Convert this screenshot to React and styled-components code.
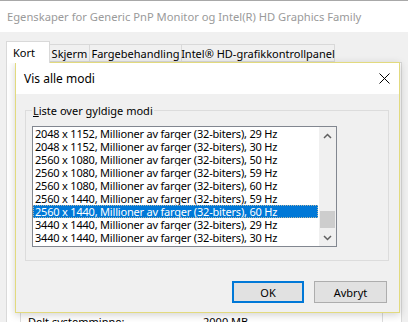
import React from "react";
import styled, { createGlobalStyle } from "styled-components";

const FONT = `"Noto Sans", "Open Sans", sans-serif`;

const Global = createGlobalStyle`
  html, body { margin: 0; padding: 0; }
  body {
    width: 408px;
    height: 322px;
    overflow: hidden;
    background: #f0f0f0;
    font-family: ${FONT};
    font-size: 11px;
    color: #000;
  }
  * { box-sizing: border-box; }
`;

const Window = styled.div`
  position: relative;
  width: 408px;
  height: 322px;
  display: flex;
  flex-direction: column;
  background: #f0f0f0;
  overflow: hidden;
`;

const WindowTitle = styled.div`
  height: 32px;
  flex: none;
  background: #fff;
  border-top: 1px solid #a8a8a8;
  display: flex;
  align-items: center;
  padding-left: 7px;
  font-size: 11.2px;
  color: #9a9a9a;
  white-space: nowrap;
`;

const WindowBody = styled.div`
  flex: 1;
  display: flex;
  flex-direction: column;
  padding: 9px 6px 0 6px;
`;

const TabStrip = styled.div`
  display: flex;
  align-items: flex-end;
  height: 21px;
  flex: none;
`;

const Tab = styled.div`
  width: ${(p) => p.$w}px;
  height: ${(p) => (p.$active ? 22 : 18)}px;
  margin-bottom: ${(p) => (p.$active ? -1 : 0)}px;
  padding-left: ${(p) => (p.$active ? 6 : 0)}px;
  border: 1px solid #d9d9d9;
  border-bottom: ${(p) => (p.$active ? "none" : "1px solid #d9d9d9")};
  border-left: ${(p) => (p.$first ? "1px solid #d9d9d9" : "none")};
  background: ${(p) => (p.$active ? "#fff" : "#f0f0f0")};
  display: flex;
  align-items: center;
  justify-content: ${(p) => (p.$active ? "flex-start" : "center")};
  white-space: nowrap;
  font-size: 11px;
  position: relative;
  z-index: ${(p) => (p.$active ? 1 : 0)};
`;

const TabPanel = styled.div`
  flex: 1;
  background: #fff;
  border: 1px solid #d9d9d9;
  border-bottom: none;
  padding: 0 18px 0 13px;
`;

const InfoGroup = styled.div`
  margin-top: 150px;
  border: 1px solid #dcdcdc;
  padding: 100px 7px 0 7px;
  height: 200px;
`;

const InfoRow = styled.div`
  display: grid;
  grid-template-columns: 175px 1fr;
  line-height: 15px;
  height: 15px;
  font-size: 11px;
  white-space: nowrap;
`;

/* ---------- dialog ---------- */

const Dialog = styled.div`
  position: absolute;
  left: 15px;
  top: 62px;
  width: 385px;
  height: 251px;
  border: 1px solid #e2da7e;
  background: #f0f0f0;
  box-shadow: 0 2px 8px rgba(0, 0, 0, 0.18);
  display: flex;
  flex-direction: column;
`;

const DialogTitle = styled.div`
  height: 31px;
  flex: none;
  background: #fff;
  display: flex;
  align-items: center;
  justify-content: space-between;
  padding-left: 8px;
  font-size: 12px;
  color: #000;
`;

const CloseButton = styled.div`
  width: 30px;
  height: 31px;
  display: flex;
  align-items: center;
  justify-content: center;
`;

const DialogBody = styled.div`
  flex: 1;
  display: flex;
  flex-direction: column;
  padding: 9px 10px 0 9px;
`;

const GroupBox = styled.fieldset`
  margin: 0;
  padding: 8px 50px 13px 6px;
  border: 1px solid #dcdcdc;
  min-width: 0;
`;

const Legend = styled.legend`
  padding: 0 1px;
  margin-left: 0;
  font-size: 11px;
  line-height: 15px;
  color: #000;
  u { text-decoration: underline; }
`;

const ListBox = styled.div`
  width: 305px;
  height: 121px;
  border: 1px solid #828790;
  background: #fff;
  display: flex;
`;

const Rows = styled.div`
  flex: 1;
  display: flex;
  flex-direction: column;
  padding-right: 1px;
  overflow: hidden;
`;

const Row = styled.div`
  height: 13px;
  line-height: 13px;
  padding-left: 2px;
  white-space: nowrap;
  overflow: hidden;
  font-size: 11px;
  letter-spacing: -0.2px;
  background: ${(p) => (p.$selected ? "#0078d7" : "transparent")};
  color: ${(p) => (p.$selected ? "#fff" : "#000")};
  outline: ${(p) => (p.$selected ? "1px dotted rgba(255,210,150,0.7)" : "none")};
  outline-offset: -1px;
`;

const ScrollBar = styled.div`
  width: 17px;
  flex: none;
  background: #f0f0f0;
  display: flex;
  flex-direction: column;
`;

const ScrollArrow = styled.div`
  height: 17px;
  flex: none;
  display: flex;
  align-items: center;
  justify-content: center;
`;

const ScrollTrack = styled.div`
  flex: 1;
  padding: ${(p) => p.$offset}px 1px 0 1px;
`;

const ScrollThumb = styled.div`
  height: 17px;
  background: #cdcdcd;
`;

const ButtonRow = styled.div`
  display: flex;
  justify-content: flex-end;
  gap: 10px;
  margin-top: 20px;
  padding-right: 2px;
`;

const Button = styled.div`
  width: ${(p) => p.$w}px;
  height: 22px;
  background: #e1e1e1;
  border: ${(p) => (p.$default ? "2px solid #0078d7" : "1px solid #adadad")};
  display: flex;
  align-items: center;
  justify-content: center;
  font-size: 11px;
  color: #000;
`;

const Chevron = ({ up }) => (
  <svg width="9" height="6" viewBox="0 0 9 6">
    <path
      d={up ? "M1 5 L4.5 1.5 L8 5" : "M1 1 L4.5 4.5 L8 1"}
      fill="none"
      stroke="#606060"
      strokeWidth="1.5"
    />
  </svg>
);

const CloseIcon = () => (
  <svg width="11" height="11" viewBox="0 0 11 11">
    <path d="M0.5 0.5 L10.5 10.5 M10.5 0.5 L0.5 10.5" stroke="#000" strokeWidth="1" />
  </svg>
);

const modes = [
  ["2048 x 1152", 29],
  ["2048 x 1152", 30],
  ["2560 x 1080", 50],
  ["2560 x 1080", 59],
  ["2560 x 1080", 60],
  ["2560 x 1440", 59],
  ["2560 x 1440", 60],
  ["3440 x 1440", 29],
  ["3440 x 1440", 30],
];

const tabs = [
  { label: "Kort", w: 44, active: true },
  { label: "Skjerm", w: 40 },
  { label: "Fargebehandling", w: 92 },
  { label: "Intel® HD-grafikkontrollpanel", w: 153 },
];

export default function App() {
  return (
    <>
      <Global />
      <Window>
        <WindowTitle>Egenskaper for Generic PnP Monitor og Intel(R) HD Graphics Family</WindowTitle>
        <WindowBody>
          <TabStrip>
            {tabs.map((t, i) => (
              <Tab key={t.label} $w={t.w} $active={t.active} $first={i === 0}>
                {t.label}
              </Tab>
            ))}
          </TabStrip>
          <TabPanel>
            <InfoGroup>
              <InfoRow>
                <span>Delt systemminne:</span>
                <span>2000 MB</span>
              </InfoRow>
            </InfoGroup>
          </TabPanel>
        </WindowBody>

        <Dialog>
          <DialogTitle>
            <span>Vis alle modi</span>
            <CloseButton>
              <CloseIcon />
            </CloseButton>
          </DialogTitle>
          <DialogBody>
            <GroupBox>
              <Legend>
                <u>L</u>iste over gyldige modi
              </Legend>
              <ListBox>
                <Rows>
                  {modes.map(([res, hz], i) => (
                    <Row key={i} $selected={i === 6}>
                      {res}, Millioner av farger (32-biters), {hz} Hz
                    </Row>
                  ))}
                </Rows>
                <ScrollBar>
                  <ScrollArrow>
                    <Chevron up />
                  </ScrollArrow>
                  <ScrollTrack $offset={67}>
                    <ScrollThumb />
                  </ScrollTrack>
                  <ScrollArrow>
                    <Chevron />
                  </ScrollArrow>
                </ScrollBar>
              </ListBox>
            </GroupBox>
            <ButtonRow>
              <Button $w={72} $default>OK</Button>
              <Button $w={73}>Avbryt</Button>
            </ButtonRow>
          </DialogBody>
        </Dialog>
      </Window>
    </>
  );
}
